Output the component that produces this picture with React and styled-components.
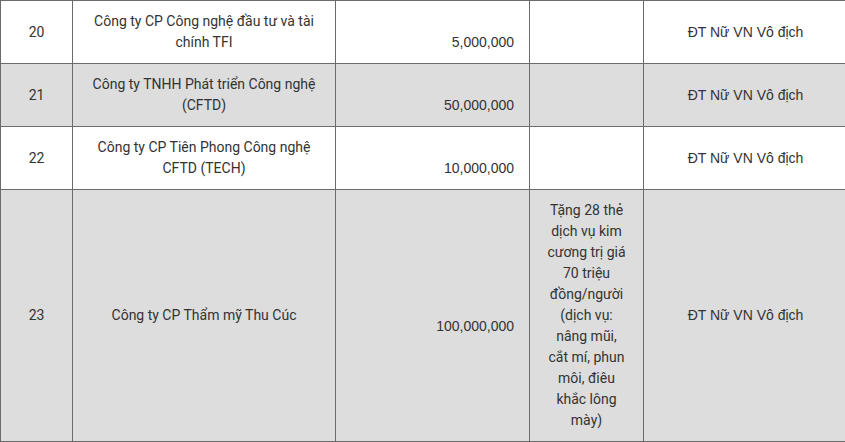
import React from "react";
import styled, { createGlobalStyle } from "styled-components";

const Global = createGlobalStyle`
  html, body { margin: 0; padding: 0; background: #fff; overflow: hidden; }
  body { font-family: Roboto, "Noto Sans", sans-serif; }
`;

const Table = styled.table`
  border-collapse: collapse;
  table-layout: fixed;
  width: 847px;
  color: #333;
  font-size: 14px;
  line-height: 21px;
`;

const Col = styled.col`
  width: ${(p) => p.$w}px;
`;

const Row = styled.tr`
  background: ${(p) => (p.$shaded ? "#dddddd" : "#ffffff")};
`;

const Cell = styled.td`
  border: 1px solid #6b6b6b;
  padding: 10px 15px;
  vertical-align: middle;
  text-align: ${(p) => p.$align || "center"};
  font-family: ${(p) =>
    p.$arial ? '"Liberation Sans", Arial, sans-serif' : 'Roboto, "Noto Sans", sans-serif'};
`;

const Amount = styled.span`
  display: block;
  padding-top: 21px;
`;

const widths = [72, 263, 194, 114, 204];

const rows = [
  { no: 20, name: "Công ty CP Công nghệ đầu tư và tài chính TFI", amount: "5,000,000", gift: "", team: "ĐT Nữ VN Vô địch" },
  { no: 21, name: "Công ty TNHH Phát triển Công nghệ (CFTD)", amount: "50,000,000", gift: "", team: "ĐT Nữ VN Vô địch" },
  { no: 22, name: "Công ty CP Tiên Phong Công nghệ CFTD (TECH)", amount: "10,000,000", gift: "", team: "ĐT Nữ VN Vô địch" },
  {
    no: 23,
    name: "Công ty CP Thẩm mỹ Thu Cúc",
    amount: "100,000,000",
    gift: "Tặng 28 thẻ dịch vụ kim cương trị giá 70 triệu đồng/người (dịch vụ: nâng mũi, cắt mí, phun môi, điêu khắc lông mày)",
    team: "ĐT Nữ VN Vô địch",
  },
];

export default function App() {
  return (
    <>
      <Global />
      <Table>
        <colgroup>
          {widths.map((w, i) => (
            <Col key={i} $w={w} />
          ))}
        </colgroup>
        <tbody>
          {rows.map((r, i) => (
            <Row key={r.no} $shaded={i % 2 === 1}>
              <Cell>{r.no}</Cell>
              <Cell>{r.name}</Cell>
              <Cell $align="right" $arial>
                <Amount>{r.amount}</Amount>
              </Cell>
              <Cell>{r.gift}</Cell>
              <Cell $arial>{r.team}</Cell>
            </Row>
          ))}
        </tbody>
      </Table>
    </>
  );
}
